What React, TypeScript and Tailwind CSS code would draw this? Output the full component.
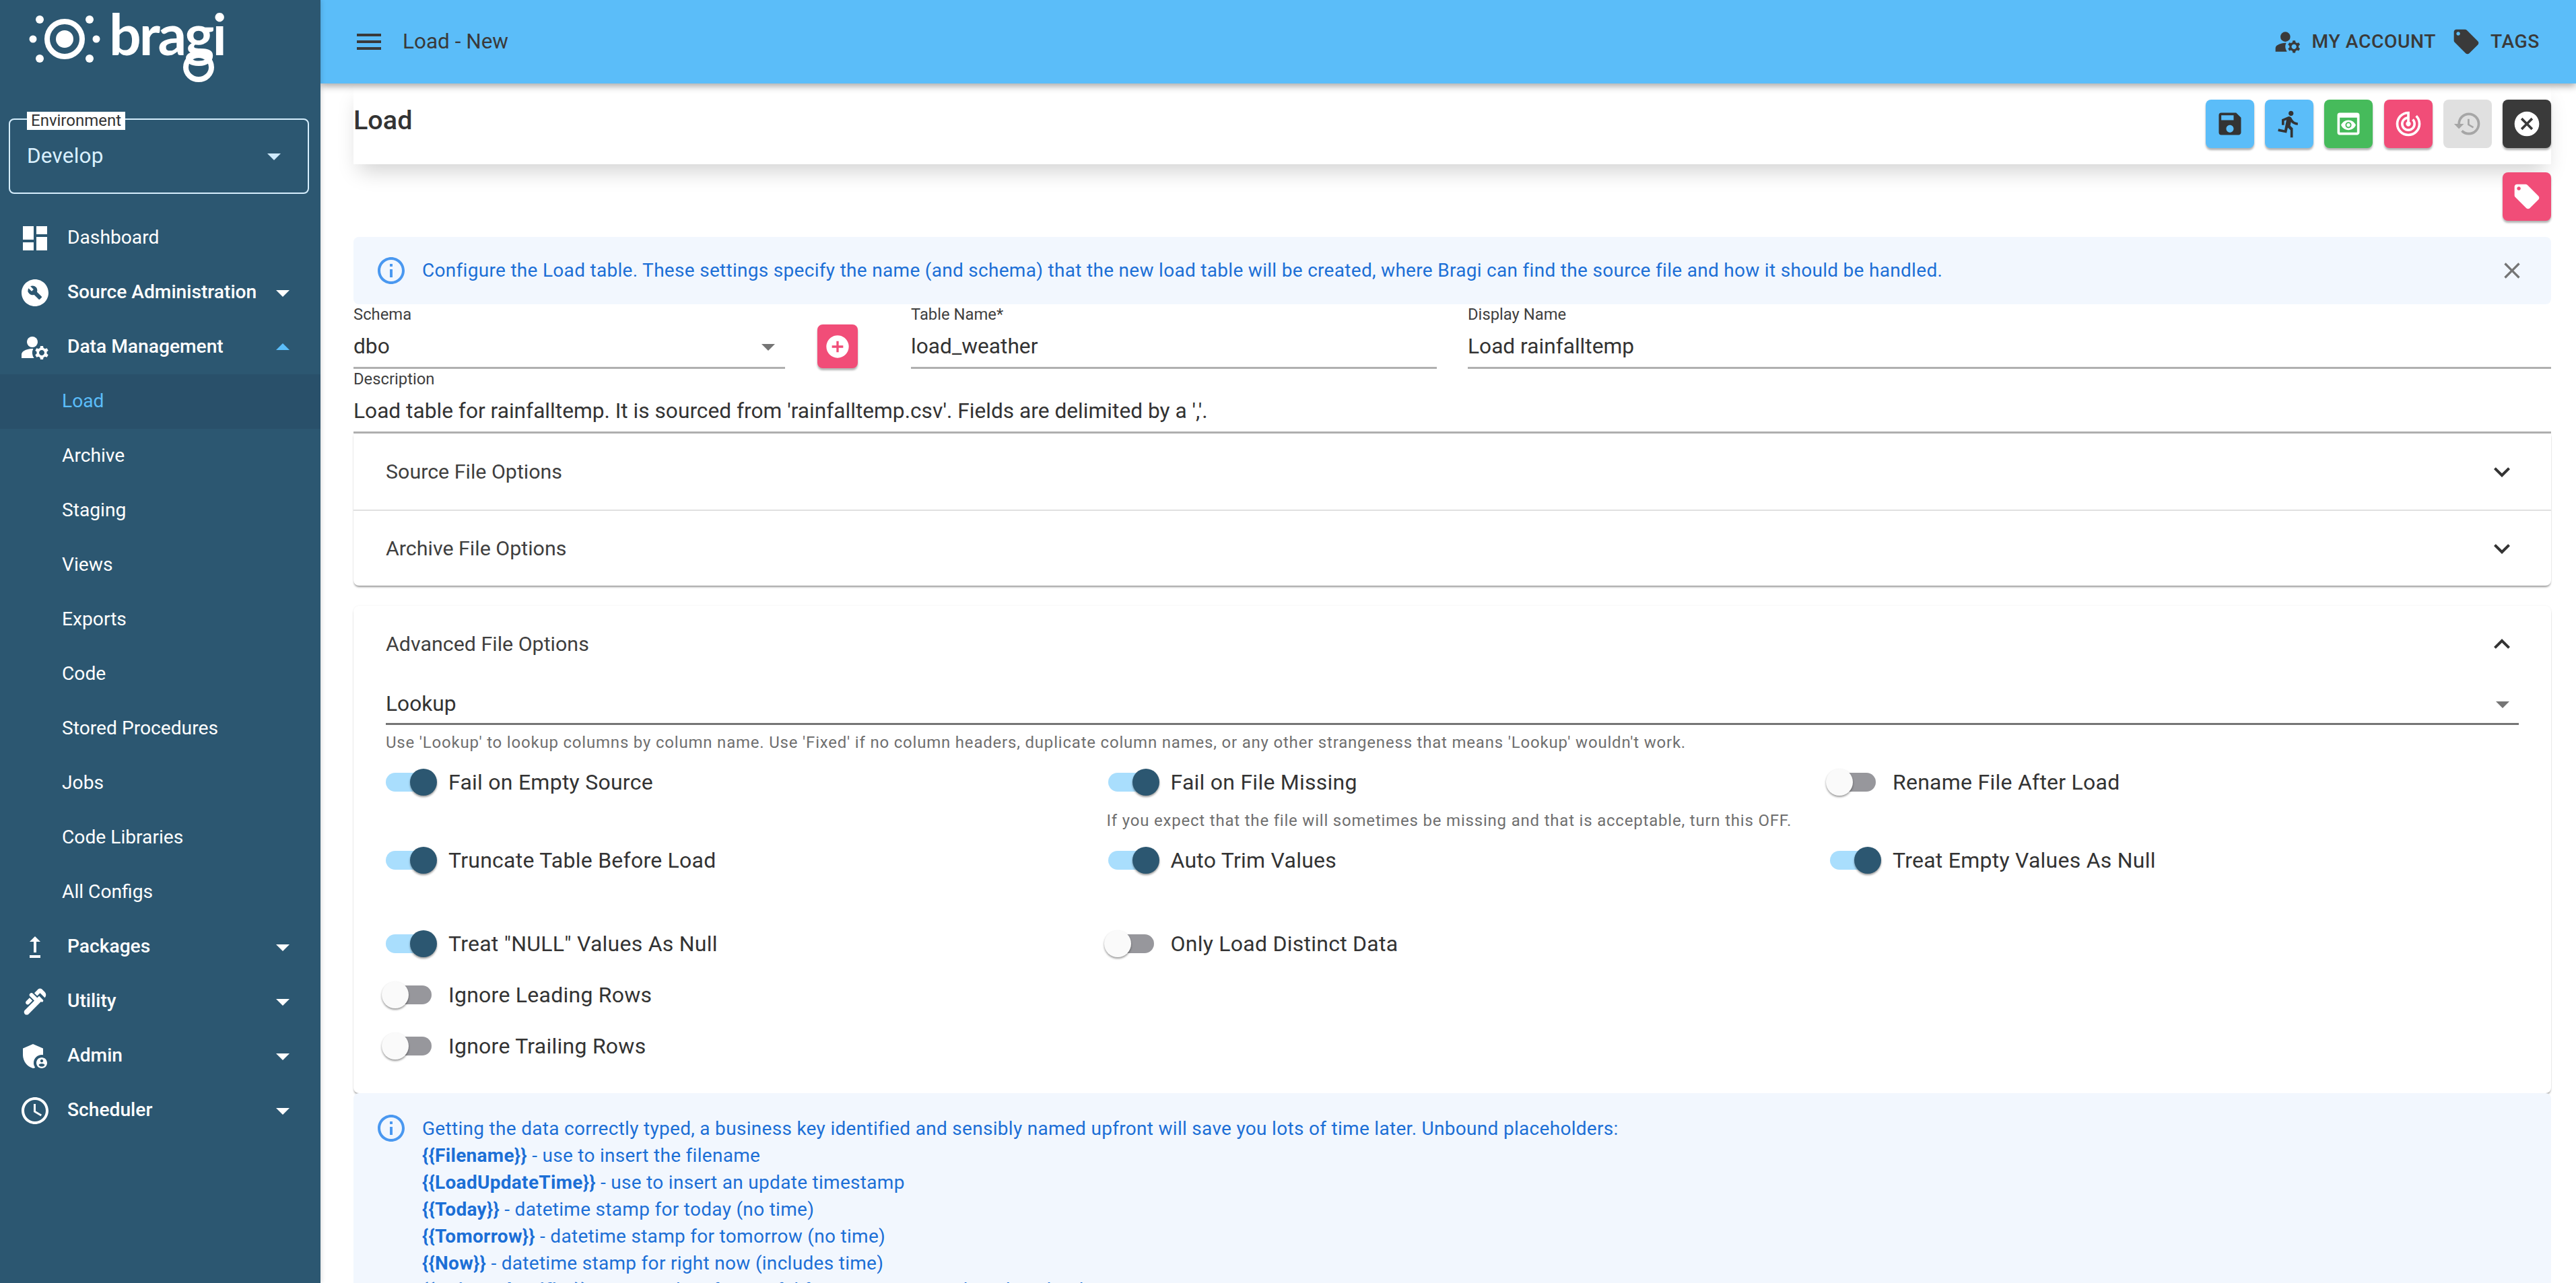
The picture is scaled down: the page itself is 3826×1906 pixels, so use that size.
import type { ReactNode } from 'react'
import {
  MdDashboard, MdBuildCircle, MdManageAccounts, MdUpgrade, MdPlumbing, MdAdminPanelSettings, MdAccessTime,
  MdArrowDropDown, MdArrowDropUp, MdMenu, MdLocalOffer, MdSave, MdDirectionsRun, MdPreview, MdTrackChanges,
  MdRestore, MdCancel, MdInfoOutline, MdClose, MdAddCircle, MdExpandMore, MdExpandLess,
} from 'react-icons/md'

const subItems = ['Archive', 'Staging', 'Views', 'Exports', 'Code', 'Stored Procedures', 'Jobs', 'Code Libraries', 'All Configs']

function NavRow({ icon, label, open, plain }: { icon: ReactNode; label: string; open?: boolean; plain?: boolean }) {
  return (
    <div className="flex h-[81px] items-center text-white">
      <div className="flex w-[100px] justify-center pl-[4px] text-[48px]">{icon}</div>
      <span className={plain ? 'text-[28.2px] font-normal' : 'text-[28.2px] font-medium'}>{label}</span>
      {!plain && (
        <span className="ml-auto mr-[32px] text-[48px]">
          {open ? <MdArrowDropUp className="text-[#5bbdf9]" /> : <MdArrowDropDown />}
        </span>
      )}
    </div>
  )
}

function Logo() {
  return (
    <div className="relative flex h-[176px] shrink-0 items-start pl-[42px] pt-[10px]">
      <svg width="112" height="96" viewBox="0 0 112 96" className="mt-[6px] shrink-0" fill="#fff">
        <circle cx="54" cy="42" r="26" fill="none" stroke="#fff" strokeWidth="8" />
        <circle cx="54" cy="42" r="13" />
        <circle cx="17" cy="13" r="6" />
        <circle cx="91" cy="13" r="6" />
        <circle cx="17" cy="71" r="6" />
        <circle cx="91" cy="71" r="6" />
        <circle cx="7" cy="42" r="5.5" />
        <circle cx="101" cy="42" r="5.5" />
      </svg>
      <span className="ml-[8px] font-['Lato',sans-serif] text-[84px] leading-[80px] tracking-[-3px] font-bold text-white">bragi</span>
      {/* loop of the g in the wordmark */}
      <svg width="48" height="44" viewBox="0 0 48 44" className="absolute left-[271px] top-[78px]">
        <ellipse cx="24" cy="22" rx="19" ry="18" fill="none" stroke="#fff" strokeWidth="8" />
      </svg>
    </div>
  )
}

function Sidebar() {
  return (
    <aside className="z-20 flex h-full w-[476px] shrink-0 flex-col bg-[#2c5771] shadow-[2px_0_6px_rgba(0,0,0,0.12)]">
      <Logo />
      <div className="relative ml-[13px] mr-[17px] flex h-[112px] shrink-0 items-start rounded-[8px] border-[2.5px] border-[#d6eefd] pl-[25px] pr-[26px] pt-[30px] text-[#d9f0ff]">
        <span className="absolute -top-[12px] left-[25px] bg-white px-[6px] text-[24px] leading-[27px] text-[#333]">Environment</span>
        <span className="text-[31.5px] leading-[48px] tracking-[0.2px]">Develop</span>
        <MdArrowDropDown className="ml-auto text-[48px] text-[#cfeafc]" />
      </div>
      <nav className="mt-[25px] flex flex-col">
        <NavRow icon={<MdDashboard />} label="Dashboard" plain />
        <NavRow icon={<MdBuildCircle />} label="Source Administration" />
        <NavRow icon={<MdManageAccounts />} label="Data Management" open />
        <div className="flex h-[81px] items-center bg-[#29506a] pl-[92px] text-[28.2px] text-[#5bbdf9]">Load</div>
        {subItems.map((s) => (
          <div key={s} className="flex h-[81px] items-center pl-[92px] text-[28.2px] text-white">{s}</div>
        ))}
        <NavRow icon={<MdUpgrade />} label="Packages" />
        <NavRow icon={<MdPlumbing />} label="Utility" />
        <NavRow icon={<MdAdminPanelSettings />} label="Admin" />
        <NavRow icon={<MdAccessTime />} label="Scheduler" />
      </nav>
    </aside>
  )
}

function TopBar() {
  return (
    <header className="z-10 flex h-[124px] shrink-0 items-center bg-[#5bbdf9] pl-[48px] pr-[54px] text-[#3a3a3a] shadow-[0_4px_10px_rgba(0,0,0,0.35)]">
      <MdMenu className="text-[48px]" />
      <span className="ml-[26px] text-[31.5px]">Load - New</span>
      <div className="ml-auto flex items-center text-[28.2px] font-medium tracking-[0.6px]">
        <MdManageAccounts className="text-[44px]" />
        <span className="ml-[14px]">MY ACCOUNT</span>
        <MdLocalOffer className="ml-[23px] text-[44px]" />
        <span className="ml-[14px]">TAGS</span>
      </div>
    </header>
  )
}

function ActionButton({ bg, children }: { bg: string; children: ReactNode }) {
  return <button className={`flex h-[72px] w-[72px] items-center justify-center rounded-[8px] text-[44px] shadow-[0_3px_3px_rgba(0,0,0,0.3)] ${bg}`}>{children}</button>
}

function Field({ label, value, children, className }: { label: string; value: string; children?: ReactNode; className: string }) {
  return (
    <div className={className}>
      <div className="h-[30px] text-[23.8px] leading-[30px] text-[#3f3f3f]">{label}</div>
      <div className="flex h-[66px] items-center border-b-[3px] border-[#b0b0b0] pt-[3px] text-[31.7px] text-[#333]">
        <span>{value}</span>
        {children}
      </div>
    </div>
  )
}

function Toggle({ on, label }: { on?: boolean; label: string }) {
  return (
    <div className="flex items-center">
      <div className="relative h-[28px] w-[68px] shrink-0 rounded-[14px]">
        <div className={on ? 'h-full w-full rounded-[14px] bg-[#a9defd]' : 'h-full w-full rounded-[14px] bg-[#97979c]'} />
        <div
          className={
            on
              ? 'absolute -right-[8px] -top-[6px] h-[40px] w-[40px] rounded-full bg-[#2c5771] shadow-[0_2px_3px_rgba(0,0,0,0.4)]'
              : 'absolute -left-[6px] -top-[6px] h-[40px] w-[40px] rounded-full bg-[#fafafa] shadow-[0_2px_3px_rgba(0,0,0,0.4)]'
          }
        />
      </div>
      <span className="ml-[25px] text-[32px] tracking-[0.25px] text-[#333]">{label}</span>
    </div>
  )
}

const placeholders: [string, string][] = [
  ['{{Filename}}', ' - use to insert the filename'],
  ['{{LoadUpdateTime}}', ' - use to insert an update timestamp'],
  ['{{Today}}', ' - datetime stamp for today (no time)'],
  ['{{Tomorrow}}', ' - datetime stamp for tomorrow (no time)'],
  ['{{Now}}', ' - datetime stamp for right now (includes time)'],
  ['{{UniqueIdentifier}}', ' - unique identifier useful for partitioning and tracking loads'],
]

const cardShadow = 'shadow-[0_3px_3px_-1px_rgba(0,0,0,0.4),0_0_2px_rgba(0,0,0,0.08)]'

export default function App() {
  return (
    <div className="flex h-[1906px] w-full overflow-hidden bg-white font-['Roboto',sans-serif]">
      <Sidebar />
      <div className="flex min-w-0 flex-1 flex-col">
        <TopBar />
        <main className="flex-1 overflow-hidden pl-[49px] pr-[37px]">
          <div className="flex h-[120px] items-start justify-between bg-white shadow-[0_18px_30px_-8px_rgba(0,0,0,0.18)]">
            <h1 className="mt-[28px] text-[39.6px] leading-[54px] font-medium text-[#333]">Load</h1>
            <div className="mt-[24px] flex gap-[16.2px]">
              <ActionButton bg="bg-[#5bbdf9] text-[#333]"><MdSave /></ActionButton>
              <ActionButton bg="bg-[#5bbdf9] text-[#333]"><MdDirectionsRun /></ActionButton>
              <ActionButton bg="bg-[#46bb5b] text-white"><MdPreview /></ActionButton>
              <ActionButton bg="bg-[#f14d78] text-white"><MdTrackChanges /></ActionButton>
              <button className="flex h-[72px] w-[72px] items-center justify-center rounded-[8px] bg-[#e0e0e0] text-[44px] text-[#a6a6a6]"><MdRestore /></button>
              <ActionButton bg="bg-[#3a3a3a] text-white"><MdCancel /></ActionButton>
            </div>
          </div>
          <div className="mt-[12px] flex justify-end">
            <ActionButton bg="bg-[#f14d78] text-white"><MdLocalOffer /></ActionButton>
          </div>
          <div className="mt-[24px] flex h-[100px] items-center rounded-[8px] bg-[#f2f7fe] pl-[32px] pr-[32px] text-[28px] tracking-[0.3px] text-[#1c6fd6]">
            <MdInfoOutline className="shrink-0 text-[48px] text-[#4a98f0]" />
            <span className="ml-[22px]">Configure the Load table. These settings specify the name (and schema) that the new load table will be created, where Bragi can find the source file and how it should be handled.</span>
            <MdClose className="ml-auto mr-[6px] text-[40px] text-[#757575]" />
          </div>
          <div className="flex items-start">
            <Field label="Schema" value="dbo" className="w-[641px]">
              <MdArrowDropDown className="ml-auto mr-[1px] text-[48px] text-[#757575]" />
            </Field>
            <button className="ml-[48px] mt-[30px] flex h-[65px] w-[60px] items-center justify-center rounded-[8px] bg-[#f14d78] text-[40px] text-white shadow-[0_3px_3px_rgba(0,0,0,0.3)]"><MdAddCircle /></button>
            <Field label="Table Name*" value="load_weather" className="ml-[79px] w-[781px]" />
            <Field label="Display Name" value="Load rainfalltemp" className="ml-[46px] flex-1" />
          </div>
          <Field label="Description" value="Load table for rainfalltemp. It is sourced from 'rainfalltemp.csv'. Fields are delimited by a ','." className="w-full" />
          <section className={`rounded-b-[8px] bg-white ${cardShadow}`}>
            <div className="flex h-[113px] items-center pl-[48px] pr-[49px] text-[30.4px] text-[#3f3f3f]">
              <span>Source File Options</span>
              <MdExpandMore className="ml-auto text-[48px] text-[#333]" />
            </div>
            <div className="flex h-[113px] items-center border-t-[2px] border-[#e0e0e0] pl-[48px] pr-[49px] text-[30.4px] text-[#3f3f3f]">
              <span>Archive File Options</span>
              <MdExpandMore className="ml-auto text-[48px] text-[#333]" />
            </div>
          </section>
          <section className={`mt-[30px] rounded-[8px] bg-white px-[48px] ${cardShadow}`}>
            <div className="flex h-[114px] items-center pr-[1px] text-[30.4px] text-[#3f3f3f]">
              <span>Advanced File Options</span>
              <MdExpandLess className="ml-auto text-[48px] text-[#333]" />
            </div>
            <div className="flex h-[63px] items-center border-b-[3px] border-[#757575] pt-[4px] text-[31.7px] text-[#333]">
              <span>Lookup</span>
              <MdArrowDropDown className="ml-auto text-[48px] text-[#757575]" />
            </div>
            <p className="mt-[10px] h-[32px] text-[24px] leading-[32px] tracking-[0.8px] text-[#6f6f6f]">Use 'Lookup' to lookup columns by column name. Use 'Fixed' if no column headers, duplicate column names, or any other strangeness that means 'Lookup' wouldn't work.</p>
            <div className="grid grid-cols-[repeat(3,1072.5px)]">
              <div className="h-[115px] pt-[19px]"><Toggle on label="Fail on Empty Source" /></div>
              <div className="h-[115px] pt-[19px]">
                <Toggle on label="Fail on File Missing" />
                <p className="mt-[17px] -ml-[2px] text-[24px] leading-[32px] tracking-[0.8px] text-[#6f6f6f]">If you expect that the file will sometimes be missing and that is acceptable, turn this OFF.</p>
              </div>
              <div className="h-[115px] pt-[19px]"><Toggle label="Rename File After Load" /></div>
              <div className="h-[126px] pt-[20px]"><Toggle on label="Truncate Table Before Load" /></div>
              <div className="h-[126px] pt-[20px]"><Toggle on label="Auto Trim Values" /></div>
              <div className="h-[126px] pt-[20px]"><Toggle on label="Treat Empty Values As Null" /></div>
              <div className="h-[76px] pt-[18px]"><Toggle on label='Treat "NULL" Values As Null' /></div>
              <div className="h-[76px] pt-[18px]"><Toggle label="Only Load Distinct Data" /></div>
              <div />
              <div className="h-[76px] pt-[18px]"><Toggle label="Ignore Leading Rows" /></div>
              <div />
              <div />
              <div className="h-[112px] pt-[18px]"><Toggle label="Ignore Trailing Rows" /></div>
            </div>
          </section>
          <div className="flex rounded-[8px] bg-[#f2f7fe] pl-[32px] pr-[32px] text-[28px] leading-[40px] tracking-[0.3px] text-[#1c6fd6]">
            <MdInfoOutline className="mt-[28px] shrink-0 text-[48px] text-[#4a98f0]" />
            <div className="ml-[22px] min-w-0 flex-1 pt-[33px]">
              <p>Getting the data correctly typed, a business key identified and sensibly named upfront will save you lots of time later. Unbound placeholders:</p>
              {placeholders.map(([k, d]) => (
                <p key={k}><b className="font-bold">{k}</b>{d}</p>
              ))}
            </div>
          </div>
        </main>
      </div>
    </div>
  )
}
